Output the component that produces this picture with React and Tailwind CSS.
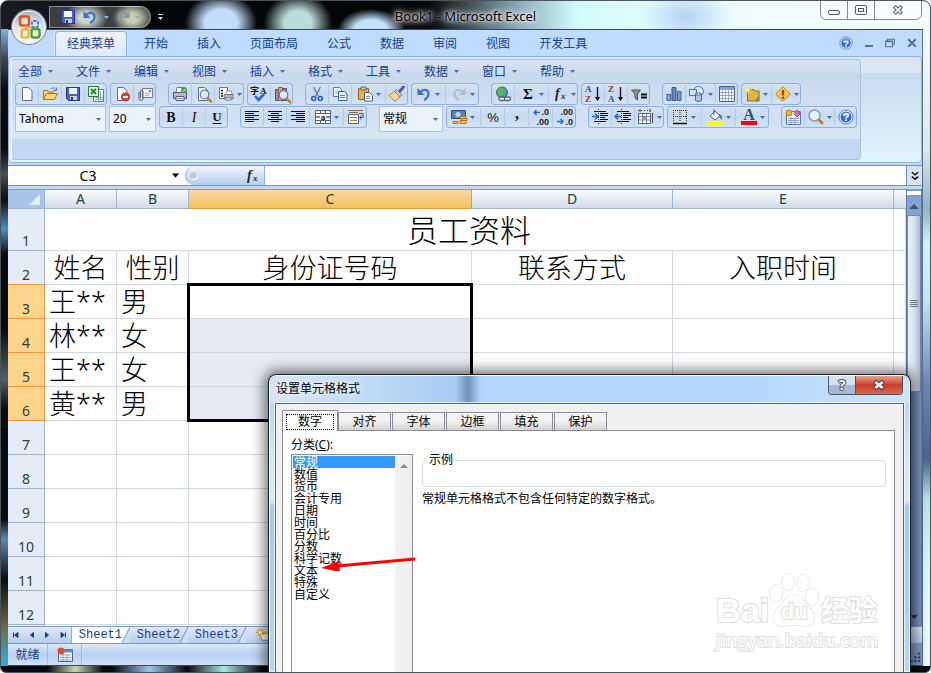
import React, { useState } from 'react';

const SERIF = 'Liberation Serif';

const Svg = ({ children, className = 'w-4 h-4' }) => (
    <svg viewBox="0 0 16 16" className={`${className} shrink-0 overflow-visible`} fill="none" aria-hidden="true">
        {children}
    </svg>
);

const Floppy = () => (
    <>
        <path d="M1.5 1.5h13v13h-11l-2-2z" fill="#4a5fc8" stroke="#27338f" />
        <path d="M4 2h8v6H4z" fill="#f4f7ff" />
        <path d="M5 10h7v4H5z" fill="#c9cfe0" />
        <path d="M6 11h2v3H6z" fill="#27338f" />
    </>
);

const Page = () => <path d="M3.5 1.5h6l3.5 3.5v9.500H3.500z" fill="#fff" stroke="#5b6f96" />;

const Undo = ({ color = '#3d6fd0' }) => (
    <>
        <path d="M4 6c4-4 9-2 8.500 2.500C12.300 11 10.500 12.500 8 14" stroke={color} strokeWidth="2.200" />
        <path d="M1.500 2v7h7z" fill={color} />
    </>
);

const Redo = ({ color = '#aebdd3' }) => (
    <g transform="translate(16 0) scale(-1 1)">
        <Undo color={color} />
    </g>
);

const HelpBall = () => (
    <>
        <circle cx="8" cy="8" r="7" fill="#fff" stroke="#4a78c8" />
        <circle cx="8" cy="8" r="5.500" fill="#2f6bd6" />
        <path d="M4 6a4.500 4.500 0 0 1 8 0c-2 2-6 2-8 0z" fill="#7fabf0" />
        <text x="8" y="12" textAnchor="middle" fontSize="11" fontWeight="bold" fontFamily="Liberation Sans" fill="#fff">?</text>
    </>
);

const Printer = () => (
    <>
        <path d="M5 1.500h7l1 5H4z" fill="#fff" stroke="#6b7891" />
        <path d="M1.500 6.500h13v6h-13z" fill="#b4bdcc" stroke="#4e5a70" />
        <path d="M4 10.500h8v4H4z" fill="#fff" stroke="#4e5a70" />
        <path d="M5 12.500h6" stroke="#6b8fd0" />
    </>
);

const Lens = ({ x = 0, y = 0 }) => (
    <g transform={`translate(${x} ${y})`}>
        <path d="M10.500 10.500l3.500 3.500" stroke="#b8842c" strokeWidth="2.500" strokeLinecap="round" />
        <circle cx="7.500" cy="7" r="4.300" fill="#d8ecfb" stroke="#6c7c98" strokeWidth="1.300" />
    </g>
);

const Lines = ({ rows }) => rows.map(([x, w], i) => <path key={i} d={`M${x} ${2.5 + i * 2}h${w}`} stroke="#111" />);

const ICONS = {
    save: <Floppy />,
    blank: <Page />,
    open: (
        <>
            <path d="M1.500 13V4.500h4l1 1.500h5V8" fill="#f3d27a" stroke="#a67a1c" />
            <path d="M1.500 13.500l3-6h11l-3 6z" fill="#ffd76a" stroke="#a67a1c" />
            <path d="M9 3c2-2 4-1 5 1M14.500 1.500v3h-3" stroke="#4b79b8" />
        </>
    ),
    excel: (
        <>
            <path d="M5.500 3.500h10v12h-10z" fill="#fff" stroke="#5a77a6" />
            <path d="M7 11.500h8M7 13.500h8M12.500 5v9M10.500 9v6" stroke="#8ca6cf" />
            <path d="M.500.500h10v10H.500z" fill="#e4f5e0" stroke="#2a7a35" />
            <path d="M3 3l5 5M8 3L3 8" stroke="#1f8a34" strokeWidth="2" />
        </>
    ),
    blocked: (
        <>
            <Page />
            <circle cx="11.500" cy="11" r="4" fill="#e2422c" stroke="#b3301f" />
            <path d="M9 11h5" stroke="#fff" strokeWidth="1.800" />
        </>
    ),
    mail: (
        <>
            <path d="M5.500 2.500h10v9h-10z" fill="#f2f6fc" stroke="#6b7f9e" />
            <path d="M12 4h2v2h-2z" fill="#e0562f" />
            <path d="M8 7.500h5M8 9.500h4" stroke="#9fb1cc" />
            <path d="M2 6v6.500a2 2 0 0 0 4 0V5a1.300 1.300 0 0 0-2.500 0v7" stroke="#59687f" />
        </>
    ),
    print: (
        <>
            <Printer />
            <circle cx="12" cy="4" r="3" fill="#3ba34a" />
            <path d="M10.500 4l1.200 1.200L13.500 3" stroke="#fff" />
        </>
    ),
    preview: (
        <>
            <Page />
            <Lens x={2} y={1.5} />
        </>
    ),
    setup: (
        <>
            <path d="M1.500 1.500h8v11h-8z" fill="#fff" stroke="#6b7891" />
            <path d="M3 4.500h2M3 7.500h2M3 10h2" stroke="#111" strokeWidth="1.500" />
            <g transform="translate(5 4) scale(.7)"><Printer /></g>
        </>
    ),
    spelling: (
        <>
            <text x="-1" y="8" fontSize="9" fontWeight="bold" fontFamily="Noto Sans CJK SC" fill="#111">字</text>
            <text x="9" y="8" fontSize="9" fontWeight="bold" fontFamily={SERIF} fill="#111">A</text>
            <path d="M4 10l3.500 4L13 8" stroke="#2f66cf" strokeWidth="2.600" />
        </>
    ),
    research: (
        <>
            <path d="M1.500 3.500h3v11h-3z" fill="#7d8fd8" stroke="#43529c" />
            <path d="M4.500 1.500h4v13h-4z" fill="#e4b33c" stroke="#8f6a14" />
            <path d="M8.500 2.500h4v12h-4z" fill="#9c7dd0" stroke="#5f438f" />
            <Lens x={2} y={2} />
        </>
    ),
    cut: (
        <>
            <path d="M4.500 1l5 9.500M11.500 1l-5 9.500" stroke="#6f7f98" strokeWidth="1.500" />
            <circle cx="4.700" cy="12.500" r="2" stroke="#2c5fc0" strokeWidth="1.600" />
            <circle cx="11.300" cy="12.500" r="2" stroke="#2c5fc0" strokeWidth="1.600" />
        </>
    ),
    copy: (
        <>
            <path d="M1.500 1.500h6l2 2v7h-8z" fill="#fff" stroke="#4a78c4" />
            <path d="M3 5h4M3 7h4" stroke="#7ea3df" />
            <path d="M6.500 5.500h6l2.500 2.500v6.500H6.500z" fill="#e9f1ff" stroke="#3766b8" />
            <path d="M8 9.500h5M8 11.500h5" stroke="#4b7fd6" />
        </>
    ),
    paste: (
        <>
            <path d="M1.500 2.500h10v11h-10z" fill="#e7b04b" stroke="#93631b" />
            <path d="M4 1h5v3H4z" fill="#c3c9d3" stroke="#5b6472" />
            <path d="M7.500 6.500h5l3 3v5.500h-8z" fill="#fff" stroke="#4b5f86" />
            <path d="M9 10.500h4M9 12.500h4" stroke="#7f93b8" />
        </>
    ),
    brush: (
        <>
            <path d="M10.500 5.500l4-4.500" stroke="#5c50a8" strokeWidth="3" strokeLinecap="round" />
            <path d="M7.500 3.500l5.500 5.500-2.500 2-5-5z" fill="#c9cfda" stroke="#77809a" />
            <path d="M5.500 5.500L11 11l-5 4.500-6-6z" fill="#f6d98c" stroke="#ae8022" />
        </>
    ),
    undo: <Undo />,
    redo: <Redo />,
    link: (
        <>
            <circle cx="7" cy="6.500" r="5.500" fill="#4a8fdc" stroke="#2a5fa0" />
            <path d="M3 3c3-3 5-1 5 0s3 2 2 4-4 1-5 4c-3-1-3-5-2-8z" fill="#59b947" />
            <rect x="4" y="11" width="6" height="3.500" rx="1.700" fill="#eef2f8" stroke="#55627a" strokeWidth="1.300" />
            <rect x="9.500" y="11" width="6" height="3.500" rx="1.700" fill="#eef2f8" stroke="#55627a" strokeWidth="1.300" />
        </>
    ),
    sum: <text x="8" y="13" textAnchor="middle" fontSize="15" fontWeight="bold" fontFamily={SERIF} fill="#111">Σ</text>,
    fx: (
        <>
            <text x="3" y="12" fontSize="14" fontStyle="italic" fontWeight="bold" fontFamily={SERIF} fill="#222">f</text>
            <text x="9" y="13" fontSize="9" fontStyle="italic" fontWeight="bold" fontFamily={SERIF} fill="#222">x</text>
        </>
    ),
    sortAsc: (
        <>
            <text x="0" y="6" fontSize="9" fontWeight="bold" fontFamily={SERIF} fill="#2c4fa8">A</text>
            <text x="0" y="16" fontSize="9" fontWeight="bold" fontFamily={SERIF} fill="#a82c2c">Z</text>
            <path d="M12.500 1v12" stroke="#111" strokeWidth="1.300" />
            <path d="M9.800 11h5.400l-2.700 4z" fill="#111" />
        </>
    ),
    sortDesc: (
        <>
            <text x="0" y="6" fontSize="9" fontWeight="bold" fontFamily={SERIF} fill="#a82c2c">Z</text>
            <text x="0" y="16" fontSize="9" fontWeight="bold" fontFamily={SERIF} fill="#2c4fa8">A</text>
            <path d="M12.500 1v12" stroke="#111" strokeWidth="1.300" />
            <path d="M9.800 11h5.400l-2.700 4z" fill="#111" />
        </>
    ),
    filter: (
        <>
            <path d="M.500 4h9L6.500 8v6L4 12V8z" fill="#8b8f94" stroke="#55585c" />
            <path d="M10 8.500h6M10 11.500h6" stroke="#111" strokeWidth="1.800" />
        </>
    ),
    chart: (
        <>
            <path d="M1 8.500h3.500v6H1z" fill="#8fa9d4" stroke="#44608f" />
            <path d="M6 1.500h4v13H6z" fill="#6687bf" stroke="#3b5587" />
            <path d="M11.500 5.500h3.500v9h-3.500z" fill="#7f9bcb" stroke="#44608f" />
        </>
    ),
    shapes: (
        <>
            <circle cx="9.500" cy="5.500" r="5" fill="#e2edfa" stroke="#4f76ad" />
            <path d="M.500 3.500h7v6h-7z" fill="#d2e2f5" stroke="#4f76ad" />
            <path d="M6.500 8v6.500c2 1.300 4 1.300 6 0V8z" fill="#a9c6ea" stroke="#3f68a5" />
            <ellipse cx="9.500" cy="8" rx="3" ry="1.200" fill="#dbe9f9" stroke="#3f68a5" />
        </>
    ),
    grid: (
        <>
            <path d="M.500.500h15v15H.500z" fill="#fff" stroke="#44608f" />
            <path d="M1 1h14v2H1z" fill="#86a3d0" />
            <path d="M1 3.500h14M1 6.500h14M1 9.500h14M1 12.500h14M3.500 1v14M6.500 1v14M9.500 1v14M12.500 1v14" stroke="#8298c0" strokeWidth=".8" />
        </>
    ),
    folder: (
        <>
            <path d="M3.500 6l2-2.500h4l1 1.500h4.500v10h-11.500z" fill="#dfb842" stroke="#8a6a14" />
            <path d="M11 14.500h4v-5z" fill="#a67c1a" />
            <path d="M4 0v8M0 4h8M1.200 1.200l5.600 5.600M6.800 1.200L1.200 6.800" stroke="#ffdf4a" />
            <circle cx="4" cy="4" r="1.500" fill="#fff3a8" />
        </>
    ),
    warn: (
        <>
            <path d="M8 .700L15.300 8 8 15.300.700 8z" fill="#fbd13a" stroke="#b98412" />
            <path d="M8 4v5.500" stroke="#d4261c" strokeWidth="2.400" />
            <circle cx="8" cy="11.700" r="1.300" fill="#d4261c" />
        </>
    ),
    bold: <text x="8" y="13" textAnchor="middle" fontSize="14" fontWeight="bold" fontFamily={SERIF} fill="#111">B</text>,
    italic: <text x="8" y="13" textAnchor="middle" fontSize="14" fontStyle="italic" fontFamily={SERIF} fill="#111">I</text>,
    underline: (
        <>
            <text x="8" y="12" textAnchor="middle" fontSize="13" fontWeight="bold" fontFamily={SERIF} fill="#111">U</text>
            <path d="M3.500 14.500h9" stroke="#111" />
        </>
    ),
    left: <Lines rows={[[1, 14], [1, 9], [1, 14], [1, 9], [1, 14], [1, 9]]} />,
    center: <Lines rows={[[1, 14], [4, 8], [1, 14], [4, 8], [1, 14], [4, 8]]} />,
    right: <Lines rows={[[1, 14], [6, 9], [1, 14], [6, 9], [1, 14], [6, 9]]} />,
    merge: (
        <>
            <path d="M.500 1.500h15v13H.500z" fill="#fff" stroke="#55657f" />
            <path d="M1 4.500h14M1 11.500h14M5.500 1v3M10.500 1v3M5.500 12v3M10.500 12v3" stroke="#55657f" />
            <text x="8" y="10.500" textAnchor="middle" fontSize="9" fontWeight="bold" fontFamily={SERIF} fill="#111">a</text>
            <path d="M1 8h4M11 8h4" stroke="#111" />
        </>
    ),
    wrap: (
        <>
            <path d="M.500 5.500h10v9H.500z" fill="#fff" stroke="#55657f" />
            <path d="M0 1.500h15M1 3.500h9" stroke="#8a6a48" />
            <path d="M2 8.500h7M2 11.500h7" stroke="#c07f43" />
            <path d="M11 4.500h4v4h-3M13.500 6.500l-2 2 2 2" stroke="#3b5c96" />
        </>
    ),
    currency: (
        <>
            <path d="M.500 1.500h14v8H.500z" fill="#5b7fc0" stroke="#2f4c88" />
            <circle cx="7" cy="5.500" r="2.500" fill="#c6d7f2" />
            <path d="M9 7.500h6v2H9zM10 9.500h6v2h-6zM9 11.500h6v3H9z" fill="#f6c842" stroke="#a87816" />
            <path d="M2 12.500h5v2H2z" fill="#f6c842" stroke="#a87816" />
        </>
    ),
    percent: <text x="8" y="13" textAnchor="middle" fontSize="13" fontFamily="Liberation Sans" fill="#111">%</text>,
    comma: <text x="8" y="10" textAnchor="middle" fontSize="16" fontWeight="bold" fontFamily={SERIF} fill="#111">,</text>,
    decInc: (
        <>
            <text x="16" y="6" textAnchor="end" fontSize="9" fontWeight="bold" fontFamily="Liberation Sans" fill="#222">.0</text>
            <text x="16" y="16" textAnchor="end" fontSize="9" fontWeight="bold" fontFamily="Liberation Sans" fill="#222">.00</text>
            <path d="M1 3.500h6M3.500 1L1 3.500 3.500 6" stroke="#2c66cf" strokeWidth="1.400" />
        </>
    ),
    decDec: (
        <>
            <text x="16" y="6" textAnchor="end" fontSize="9" fontWeight="bold" fontFamily="Liberation Sans" fill="#222">.00</text>
            <text x="16" y="16" textAnchor="end" fontSize="9" fontWeight="bold" fontFamily="Liberation Sans" fill="#222">.0</text>
            <path d="M0 12.500h6M3.500 10L6 12.500 3.500 15" stroke="#2c66cf" strokeWidth="1.400" />
        </>
    ),
    indent: (
        <>
            <Lines rows={[[2, 12], [8, 8], [8, 8], [8, 5], [8, 8], [2, 12]]} />
            <path d="M0 7.500h6M3 4.500l3 3-3 3" stroke="#2c66cf" strokeWidth="1.600" />
            <path d="M6.500 0v16" stroke="#333" strokeDasharray="1 1" />
        </>
    ),
    outdent: (
        <>
            <Lines rows={[[2, 12], [8, 8], [8, 8], [8, 5], [8, 8], [2, 12]]} />
            <path d="M0 7.500h6M3 4.500l-3 3 3 3" stroke="#2c66cf" strokeWidth="1.600" />
            <path d="M6.500 0v16" stroke="#333" strokeDasharray="1 1" />
        </>
    ),
    format: (
        <>
            <path d="M0 1.500h13" stroke="#222" strokeDasharray="1 2" />
            <path d="M2 0v3M12 0v3M14.500 4v10" stroke="#444" />
            <path d="M.500 4.500h12v10H.500z" fill="#fff" stroke="#55657f" />
            <path d="M4.500 5v9M8.500 5v9M1 7.500h11M1 11h11" stroke="#7a889f" />
            <path d="M5 8h3v3H5z" fill="#6fa0ef" />
        </>
    ),
    border: (
        <>
            <path d="M1.500 1v12M8 1v12M14.500 1v12M1 1.500h14M1 7.500h14" stroke="#333" strokeDasharray="1 1" />
            <path d="M1 14.500h14" stroke="#111" strokeWidth="1.500" />
        </>
    ),
    fill: (
        <>
            <path d="M3 7l5-5 5 5-5 4z" fill="#eef3fa" stroke="#4a5a78" />
            <path d="M7 0v6" stroke="#4a5a78" />
            <path d="M12 5c3 1 3.500 3 2.500 6-1.500-2-1-3-2.500-4z" fill="#3d6fd0" />
            <path d="M0 12h16v4H0z" fill="#ffff00" />
        </>
    ),
    color: (
        <>
            <text x="8" y="11" textAnchor="middle" fontSize="16" fontWeight="bold" fontFamily={SERIF} fill="#2c4a86">A</text>
            <path d="M0 12h16v4H0z" fill="#ff0000" />
        </>
    ),
    table: (
        <>
            <path d="M1.500 2.500h14v13h-14z" fill="#fff" stroke="#5a77b0" />
            <path d="M3 9.500h11M3 11.500h11M3 13.500h11M6 8v7M10 8v7" stroke="#8aa0d0" />
            <circle cx="4" cy="4" r="3" fill="#f3b53a" stroke="#b27a15" />
            <path d="M9 4.500l3-3.500 3.500 3.500-3.500 3.500z" fill="#d66ad6" stroke="#9a3a9c" />
        </>
    ),
    search: (
        <>
            <path d="M11 11l3 3" stroke="#b8842c" strokeWidth="3" strokeLinecap="round" />
            <circle cx="6.500" cy="6.500" r="5.500" fill="#e6f2fc" stroke="#8c99ae" strokeWidth="1.500" />
        </>
    ),
    help: <HelpBall />,
    record: (
        <>
            <path d="M1.500 2.500h14v12h-14z" fill="#fff" stroke="#43669f" />
            <path d="M6 2.500h9.500v3H6z" fill="#5c8fdb" />
            <path d="M3 8h11M3 10.500h11M3 13h11M6 7v7M10 7v7" stroke="#8aa4d0" />
            <circle cx="4" cy="4" r="3.500" fill="#dd4b31" />
        </>
    ),
};

const Caret = ({ className = 'text-[#4a6ea5]' }) => (
    <svg viewBox="0 0 5 3" className={`w-[5px] h-[3px] shrink-0 ${className}`} aria-hidden="true">
        <path d="M0 0h5L2.500 3z" fill="currentColor" />
    </svg>
);

// [icon, label, size]: md is a slightly wider button, dd and ddl carry a drop-down arrow
const TOOLBAR_TOP = [
    { items: [['blank', '新建'], ['open', '打开'], ['save', '保存'], ['excel', '另存为']] },
    { items: [['blocked', '权限'], ['mail', '邮件']] },
    { wide: true, items: [['print', '打印'], ['preview', '打印预览'], ['setup', '页面设置', 'dd']] },
    { items: [['spelling', '拼写检查'], ['research', '信息检索']] },
    { wide: true, items: [['cut', '剪切'], ['copy', '复制'], ['paste', '粘贴', 'ddl'], ['brush', '格式刷']] },
    { items: [['undo', '撤消', 'ddl'], ['redo', '恢复', 'ddl']] },
    { wide: true, items: [['link', '超链接'], ['sum', '求和', 'ddl'], ['fx', '函数', 'dd']] },
    { items: [['sortAsc', '升序'], ['sortDesc', '降序'], ['filter', '筛选']] },
    { wide: true, items: [['chart', '图表'], ['shapes', '形状', 'dd'], ['grid', '表格']] },
    { items: [['folder', '新建文件夹', 'dd'], ['warn', '错误检查', 'dd']] },
];

const TOOLBAR_BOTTOM_LEFT = [
    { items: [['bold', '加粗'], ['italic', '倾斜'], ['underline', '下划线']] },
    { wide: true, items: [['left', '左对齐'], ['center', '居中'], ['right', '右对齐'], ['merge', '合并', 'ddl'], ['wrap', '自动换行', 'md']] },
];

const TOOLBAR_BOTTOM_RIGHT = [
    { items: [['currency', '货币', 'ddl'], ['percent', '百分比', 'md'], ['comma', '千位分隔', 'md'], ['decInc', '增加小数位', 'md'], ['decDec', '减少小数位', 'md']] },
    { wide: true, items: [['indent', '增加缩进'], ['outdent', '减少缩进'], ['format', '格式', 'dd']] },
    { items: [['border', '边框', 'ddl'], ['fill', '填充颜色', 'ddl'], ['color', '字体颜色', 'ddl']] },
    { wide: true, items: [['table', '选项'], ['search', '缩放', 'dd'], ['help', '帮助']] },
];

const BUTTON_WIDTH = { sm: 'w-[23px]', md: 'w-6', dd: 'w-[30px]', ddl: 'w-[34px]' };

const ToolGroup = ({ group }) => (
    <div
        className={`flex h-[22px] shrink-0 rounded-sm ring-1 ring-inset ring-[#8fb1dc] bg-linear-to-b from-[#d6e4f5] via-[#c6d9f0] to-[#d5e5f7] ${
            group.wide ? 'ml-3' : 'ml-[3px]'
        }`}
    >
        {group.items.map(([icon, label, size = 'sm'], i) => (
            <button
                key={icon}
                aria-label={label}
                className={`flex items-center justify-center gap-[3px] ${BUTTON_WIDTH[size]} ${i > 0 ? 'border-l border-[#b3cbe8]' : ''}`}
            >
                <Svg>{ICONS[icon]}</Svg>
                {size.startsWith('dd') && <Caret />}
            </button>
        ))}
    </div>
);

const Combo = ({ label, value, className }) => (
    <div className={`relative shrink-0 ${className}`}>
        <select
            aria-label={label}
            className="block w-full h-[26px] px-[3px] appearance-none bg-[#eaf2fc] border border-[#abc5e8] text-xs text-black outline-none"
        >
            <option>{value}</option>
        </select>
        <Caret className="absolute right-[5px] top-3 text-[#4a6ea5]" />
    </div>
);

const TABS = ['开始', '插入', '页面布局', '公式', '数据', '审阅', '视图', '开发工具'];
const MENUS = ['全部', '文件', '编辑', '视图', '插入', '格式', '工具', '数据', '窗口', '帮助'];

const OfficeButton = () => (
    <button aria-label="Office 按钮" className="absolute left-2.5 top-1.5 w-10 h-10">
        <svg viewBox="0 0 40 40" className="w-10 h-10" fill="none">
            <defs>
                <radialGradient id="orb" cx=".5" cy=".8" r=".8">
                    <stop offset="0" stopColor="#ffffff" />
                    <stop offset=".6" stopColor="#dfe4ec" />
                    <stop offset="1" stopColor="#9aa6b8" />
                </radialGradient>
            </defs>
            <circle cx="18" cy="20" r="17.500" fill="url(#orb)" stroke="#6f7f99" />
            <circle cx="18" cy="20" r="16" stroke="#fff" />
            <rect x="9" y="9.500" width="9" height="9" rx="2" stroke="#e4511b" strokeWidth="2.600" />
            <rect x="21" y="14" width="6" height="6" rx="1.500" stroke="#3c86d6" strokeWidth="2" strokeDasharray="3 1" />
            <rect x="10.500" y="22.500" width="7" height="8" rx="1.500" stroke="#f3ac1d" strokeWidth="2.200" />
            <rect x="20.500" y="22" width="8" height="8.500" rx="2" stroke="#4f9e33" strokeWidth="2.400" />
            <path d="M15 17v5M17 20h4" stroke="#f2941e" strokeWidth="1.500" />
        </svg>
    </button>
);

const TitleBar = () => (
    <header className="relative flex h-7 shrink-0 justify-center bg-[radial-gradient(ellipse_36px_30px_at_220px_22px,#c3dcfc_45%,transparent),radial-gradient(ellipse_34px_30px_at_297px_22px,#b9ddd8_40%,transparent),radial-gradient(ellipse_34px_22px_at_370px_30px,#c3e2fb_50%,transparent),radial-gradient(ellipse_46px_30px_at_685px_16px,#b4d2f6,transparent),linear-gradient(90deg,#1a1c20_0,#050608_15%,#050608_46%,#8fb0bd_56%,#d3fbfd_62%,#e2fdff_72%,#effcfd_80%,#f6fcfc)]">
        <div className="absolute left-12 top-[5px] flex h-[22px] w-[102px] items-center rounded-r-full border border-white/40 bg-[radial-gradient(ellipse_22px_16px_at_36px_11px,#cfd8cd_30%,transparent),radial-gradient(ellipse_20px_16px_at_82px_11px,#c4cfae_30%,transparent)] bg-[#3c3e42] pl-2.5">
            <button aria-label="保存"><Svg>{ICONS.save}</Svg></button>
            <button aria-label="撤消" className="ml-1.5 flex items-center gap-1.5">
                <Svg>{ICONS.undo}</Svg>
                <Caret className="text-[#8fb6f0]" />
            </button>
            <button aria-label="恢复" className="ml-1.5 flex items-center gap-1"><Svg><Redo color="#8797ac" /></Svg><Caret className="text-[#a3ab9f]" /></button>
        </div>
        <button aria-label="自定义快速访问工具栏" className="absolute left-[157px] top-[13px] flex flex-col gap-px border-t border-[#cfe0f8] pt-0.5">
            <Caret className="text-[#cfe0f8]" />
        </button>
        <h1 className="pt-1.5 text-[13px] leading-[18px] text-black [text-shadow:0_0_3px_#fff,0_0_6px_#fff,0_0_10px_#fff]">
            Book1 - Microsoft Excel
        </h1>
        <div className="absolute right-2 -top-px flex h-5 w-[102px] rounded-b-md border border-[#7d8c90] bg-white/40">
            <button aria-label="最小化" className="flex flex-1 items-center justify-center border-r border-[#7d8c90]">
                <span className="mt-1 h-[5px] w-3 rounded-xs border border-[#4f5a62] bg-white" />
            </button>
            <button aria-label="还原" className="flex flex-1 items-center justify-center border-r border-[#7d8c90]">
                <span className="flex h-2.5 w-3 items-center justify-center rounded-xs border border-[#4f5a62] bg-white">
                    <span className="h-1 w-1.5 border border-[#4f5a62]" />
                </span>
            </button>
            <button aria-label="关闭" className="flex w-[46px] items-center justify-center">
                <Svg className="w-2.5 h-2.5">
                    <path d="M2 2l12 12M14 2L2 14" stroke="#4f5a62" strokeWidth="6" />
                    <path d="M3 3l10 10M13 3L3 13" stroke="#fff" strokeWidth="2.500" />
                </Svg>
            </button>
        </div>
    </header>
);

const Ribbon = () => (
    <>
        <nav className="flex h-[26px] shrink-0 items-end bg-[#bfdbff] pl-[45px] text-xs text-[#15428b]">
            <div className="flex flex-1 items-end gap-px">
                <button className="mx-0.5 h-[25px] rounded-t border border-b-0 border-[#8db2e3] bg-linear-to-b from-[#ebf3fd] to-[#dfeafa] px-[11px] shadow-[0_0_2px_#fff]">
                    经典菜单
                </button>
                {TABS.map((tab) => (
                    <button key={tab} className="h-[25px] px-3.5">{tab}</button>
                ))}
            </div>
            <div className="flex h-full items-center gap-3 pr-[5px]">
                <button aria-label="帮助"><Svg className="w-3.5 h-3.5"><HelpBall /></Svg></button>
                <button aria-label="最小化窗口" className="mt-1.5 h-0.5 w-2 bg-[#5f6f86]" />
                <button aria-label="还原窗口">
                    <Svg className="w-2.5 h-2.5"><path d="M4 4V2h11v8h-2M1 5h11v9H1zM1 6h11" stroke="#5f6f86" strokeWidth="1.800" /></Svg>
                </button>
                <button aria-label="关闭窗口">
                    <Svg className="w-2.5 h-2.5"><path d="M2 2l12 12M14 2L2 14" stroke="#5f6f86" strokeWidth="3" /></Svg>
                </button>
            </div>
        </nav>
        <section className="shrink-0 rounded border border-[#8db2e3] bg-linear-to-b from-[#dbe6f4] from-15% via-[#c9dbef] via-16% to-[#e3f4fd] p-[2px]">
            <div className="mr-[58px] rounded border border-[#a6c1e0] border-l-white/70 bg-linear-to-b from-[#dbe5f2] from-0% via-[#c8d9ed] via-16% to-[#d8e6f5] to-80% text-[#15428b]">
                <div className="flex h-[23px] items-center pl-[3px]">
                    {MENUS.map((menu) => (
                        <button key={menu} className="flex w-[58px] items-center gap-1.5 pl-[3px] text-xs">
                            {menu}
                            <Caret />
                        </button>
                    ))}
                </div>
                <div className="flex pb-px">
                    {TOOLBAR_TOP.map((group, i) => <ToolGroup key={i} group={group} />)}
                </div>
                <div className="flex h-[33px] items-start pl-[3px]">
                    <Combo label="字体" value="Tahoma" className="mr-[3px] w-[91px]" />
                    <Combo label="字号" value="20" className="w-[47px]" />
                    {TOOLBAR_BOTTOM_LEFT.map((group, i) => <ToolGroup key={i} group={group} />)}
                    <Combo label="数字格式" value="常规" className="ml-3 w-16" />
                    {TOOLBAR_BOTTOM_RIGHT.map((group, i) => <ToolGroup key={i} group={group} />)}
                </div>
                <div className="h-5 rounded-b bg-[#c1d8f0]" />
            </div>
        </section>
    </>
);

const FormulaBar = () => {
    const [formula, setFormula] = useState('');

    return (
        <div className="mt-0.5 flex h-[21px] shrink-0 border-y border-[#6f94c4] bg-white">
            <label className="relative flex w-[176px]">
                <input aria-label="名称框" defaultValue="C3" className="w-full pr-4 text-center text-sm leading-4 text-black outline-none" />
                <Caret className="absolute right-1.5 top-2 scale-150 text-black" />
            </label>
            <div className="ml-px flex w-20 items-center justify-between rounded-l-full border border-[#8fb1dc] border-y-0 bg-linear-to-b from-[#f2f7fe] to-[#b4cdee] pr-1 pl-1">
                <span className="h-2 w-2 rounded-full bg-[#c2c9d4] shadow-[inset_-1px_-1px_1px_#fff]" />
                <button aria-label="插入函数"><Svg>{ICONS.fx}</Svg></button>
            </div>
            <input
                aria-label="编辑栏"
                value={formula}
                onChange={(e) => setFormula(e.target.value)}
                className="min-w-0 flex-1 px-1 text-sm outline-none"
            />
            <button aria-label="展开编辑栏" className="flex w-4 items-center justify-center border-l border-[#6f94c4] bg-[#d5e4f7]">
                <Svg className="w-2.5 h-2.5"><path d="M3 2l5 4 5-4M3 9l5 4 5-4" stroke="#111" strokeWidth="2.500" /></Svg>
            </button>
        </div>
    );
};

const COLUMNS = ['A', 'B', 'C', 'D', 'E'];
const PEOPLE = {
    3: ['王**', '男'],
    4: ['林**', '女'],
    5: ['王**', '女'],
    6: ['黄**', '男'],
};
const ROWS = [3, 4, 5, 6, 7, 8, 9, 10, 11, 12, 13];

const CELL = 'border-r border-b border-[#d0d7e5] p-0';
const ROW_HEAD = 'border-r border-b p-0 align-bottom text-center text-sm leading-[18px] font-normal';

const Sheet = () => (
    <div className="min-w-0 flex-1 overflow-hidden bg-white">
        <table className="w-full table-fixed border-separate border-spacing-0 border-t border-[#7a9cc6] text-black">
            <colgroup>
                <col className="w-[37px]" />
                <col className="w-[72px]" />
                <col className="w-[72px]" />
                <col className="w-[283px]" />
                <col className="w-[201px]" />
                <col className="w-[221px]" />
                <col />
            </colgroup>
            <thead>
                <tr className="h-[19px] text-sm leading-4 text-[#27413e]">
                    <th className="border-r border-b border-[#9eb6ce] bg-[#a9c4e9] p-0">
                        <svg viewBox="0 0 11 11" className="ml-auto mr-1 h-[11px] w-[11px]"><path d="M11 0v11H0z" fill="#e2ebf6" /></svg>
                    </th>
                    {COLUMNS.map((col) => (
                        <th
                            key={col}
                            className={`border-r border-b p-0 font-normal bg-linear-to-b ${
                                col === 'C'
                                    ? 'border-[#f29536] from-[#f9d99f] to-[#f1c15f]'
                                    : 'border-[#9eb6ce] from-[#f9fcfd] to-[#d3dbe9]'
                            }`}
                        >
                            {col}
                        </th>
                    ))}
                    <th aria-label="F" className="border-b border-[#9eb6ce] bg-linear-to-b from-[#f9fcfd] to-[#d3dbe9] p-0" />
                </tr>
            </thead>
            <tbody className="font-light">
                <tr className="h-[42px]">
                    <th className={`${ROW_HEAD} border-[#9eb6ce] bg-[#e4ecf7] text-[#27413e]`}>1</th>
                    <td colSpan={5} className={`${CELL} text-center text-[31px] leading-10`}>员工资料</td>
                    <td className={CELL} />
                </tr>
                <tr className="h-[34px] text-center text-[27px] leading-8">
                    <th className={`${ROW_HEAD} border-[#9eb6ce] border-b-[#f29536] bg-[#e4ecf7] text-[#27413e]`}>2</th>
                    <td className={CELL}>姓名</td>
                    <td className={CELL}>性别</td>
                    <td className={CELL}>身份证号码</td>
                    <td className={CELL}>联系方式</td>
                    <td className={CELL}>入职时间</td>
                    <td className={CELL} />
                </tr>
                {ROWS.map((row) => {
                    const [name, gender] = PEOPLE[row] || [];
                    return (
                        <tr key={row} className="h-[34px] text-[27px] leading-8">
                            <th
                                className={`${ROW_HEAD} text-[#27413e] ${
                                    PEOPLE[row] ? 'border-[#f29536] bg-[#ffd58d]' : 'border-[#9eb6ce] bg-[#e4ecf7]'
                                }`}
                            >
                                {row < 13 && row}
                            </th>
                            <td className={`${CELL} pl-1`}>{name}</td>
                            <td className={`${CELL} pl-1`}>{gender}</td>
                            <td className={`relative ${CELL} ${row > 3 && PEOPLE[row] ? 'bg-[#e7eaf5]' : ''}`}>
                                {/* selection frame around C3:C6 */}
                                {row === 3 && (
                                    <div className="absolute -top-0.5 -left-0.5 z-10 h-[139px] w-[286px] border-[3px] border-black" />
                                )}
                            </td>
                            <td className={CELL} />
                            <td className={CELL} />
                            <td className={CELL} />
                        </tr>
                    );
                })}
            </tbody>
        </table>
    </div>
);

const VerticalScroll = () => (
    <div className="flex w-4 shrink-0 flex-col border-x border-[#5f7fae] bg-linear-to-r from-[#5d7ba8] to-[#7b98c2]">
        <div className="h-2 border-y-2 border-[#7a9cc6] bg-white" />
        <button aria-label="向上" className="flex h-[18px] items-center justify-center bg-[#85a3d0]">
            <svg viewBox="0 0 10 5" className="h-[5px] w-2.5"><path d="M0 5l5-5 5 5z" fill="#42536f" /></svg>
        </button>
        <div className="flex h-[177px] flex-col items-center justify-center gap-px rounded-xs border border-[#6f88b0] bg-linear-to-r from-[#e9eff6] via-[#dae3ee] to-[#a9bbd0]">
            {[0, 1, 2, 3].map((i) => <span key={i} className="h-px w-2 bg-[#6d7c92]" />)}
        </div>
        <div className="flex-1" />
        <button aria-label="向下" className="flex h-[18px] items-center justify-center">
            <svg viewBox="0 0 10 5" className="h-1 w-2"><path d="M0 0h10L5 5z" fill="#26344c" /></svg>
        </button>
    </div>
);

const NAV_ARROWS = [
    ['第一张', 'M3 3v10M12 3v10L5 8z'],
    ['上一张', 'M11 3v10L5 8z'],
    ['下一张', 'M5 3v10l6-5z'],
    ['最后一张', 'M13 3v10M4 3v10l7-5z'],
];

const SheetTabs = () => (
    <div className="flex h-[18px] shrink-0 border-y border-[#7a9cc6] bg-linear-to-b from-[#dfeafa] to-[#b5cdee]">
        <div className="flex w-16 items-center justify-around border-r border-[#8fb1dc]">
            {NAV_ARROWS.map(([label, d]) => (
                <button key={label} aria-label={label}>
                    <Svg className="w-2 h-2"><path d={d} fill="#15428b" stroke="#15428b" strokeWidth="2" /></Svg>
                </button>
            ))}
        </div>
        {['Sheet1', 'Sheet2', 'Sheet3'].map((name, i) => (
            <button
                key={name}
                className={`flex w-[58px] shrink-0 items-center justify-end font-['Liberation_Mono'] text-xs leading-4 text-[#15428b] ${
                    i === 0 ? 'bg-white' : ''
                }`}
            >
                {name}
                <svg viewBox="0 0 8 16" className="h-4 w-2 shrink-0">
                    <path d="M8 0v16H0z" fill="#cddef5" />
                    <path d="M8 0L0 16" stroke="#6f94c4" />
                </svg>
            </button>
        ))}
        <button aria-label="插入工作表" className="ml-2.5">
            <Svg className="h-3.5 w-3.5">
                <path d="M4 6h11v8H7z" fill="#fff" stroke="#6f83a8" />
                <path d="M5 0v10M0 5h10M1.500 1.500l7 7M8.500 1.500l-7 7" stroke="#e0941c" strokeWidth="1.200" />
                <circle cx="5" cy="5" r="2" fill="#fff2b0" />
            </Svg>
        </button>
    </div>
);

const StatusBar = () => (
    <footer className="flex h-[21px] shrink-0 items-center bg-linear-to-b from-[#dce9fa] via-[#b7d0f2] to-[#cfe1f8] text-xs text-[#15428b]">
        <span className="flex h-full w-10 items-center justify-center border-r border-[#9dbbe4]">就绪</span>
        <button aria-label="录制宏" className="flex h-full w-[34px] items-center justify-center border-r border-[#9dbbe4]">
            <Svg>{ICONS.record}</Svg>
        </button>
        <div className="ml-auto flex h-full w-4 items-end justify-end bg-[#7f9ccb] p-px">
            <Svg className="h-3 w-3">
                <path d="M12 2h3M7 7h3M12 7h3M2 12h3M7 12h3M12 12h3" stroke="#33486e" strokeWidth="3" />
            </Svg>
        </div>
    </footer>
);

const FORMATS = ['常规', '数值', '货币', '会计专用', '日期', '时间', '百分比', '分数', '科学记数', '文本', '特殊', '自定义'];

const Watermark = () => (
    <div className="absolute right-4 bottom-5 text-white [-webkit-text-stroke:2px_#dedede] [paint-order:stroke_fill]" aria-hidden="true">
        <div className="flex items-end">
            <span className="font-['Liberation_Sans'] text-[34px] leading-9 font-bold">Bai</span>
            <span className="relative block h-14 w-[50px]">
                <svg viewBox="0 0 50 56" className="absolute inset-0 h-14 w-[50px]" fill="#fff" stroke="#dcdcdc" strokeWidth="1.200">
                    <ellipse cx="7" cy="21" rx="6.500" ry="8.500" />
                    <ellipse cx="19" cy="10" rx="6" ry="8.500" />
                    <ellipse cx="34" cy="11" rx="6" ry="8.500" />
                    <ellipse cx="43" cy="25" rx="6.500" ry="8.500" />
                    <path d="M25 23c8 0 11 8 16 13 7 7 5 18-4 18-6 0-8-1-12-1s-6 1-12 1C3 54 2 43 9 36c5-5 8-13 16-13z" />
                </svg>
                <span className="absolute inset-x-0 bottom-1 text-center font-['Liberation_Sans'] text-[22px] leading-6 font-bold">du</span>
            </span>
            <span className="pb-0.5 pl-0.5 text-[28px] leading-8 font-bold">经验</span>
        </div>
        <div className="font-['Open_Sans'] text-[19px] leading-6">jingyan.baidu.com</div>
    </div>
);

const FormatDialog = () => {
    const [format, setFormat] = useState('常规');

    return (
        <div
            role="dialog"
            aria-label="设置单元格格式"
            className="absolute top-[373px] right-[19px] bottom-0 left-[267px] z-20 flex flex-col rounded-t-lg border border-b-0 border-[#1c232b] bg-[linear-gradient(180deg,#a9cbf0_0,#b5d8fc_30px,#d3e6fa_80px,#dbeafa_125px,#a4c9ee_132px,#b3d6fb)] px-1.5 text-xs text-black shadow-[0_0_14px_3px_rgba(0,0,0,.6),inset_0_0_0_1px_rgba(255,255,255,.8)]"
        >
            <div className="-mx-[5px] mt-px flex h-[27px] shrink-0 rounded-t-lg bg-[linear-gradient(90deg,#d5e4f6_0,#c0daf6_15%,#a8ccf3_29%,#7291b6_31%,#b3d8fe_33%,#b3d8fe_75%,#cfe3f9)]">
                <h2 className="flex-1 pt-1 pl-[6px] leading-[18px] [text-shadow:0_0_6px_#fff,0_0_8px_#fff]">设置单元格格式</h2>
                <div className="flex h-[19px] overflow-hidden rounded-b border border-t-0 border-[#4a5566]">
                    <button aria-label="帮助" className="w-[27px] border-r border-[#4a5566] bg-linear-to-b from-[#d6e2f0] from-50% to-[#a3b9d4] to-50%">
                        <span className="block text-sm leading-[18px] font-bold text-white [-webkit-text-stroke:2px_#45505e] [paint-order:stroke_fill]">?</span>
                    </button>
                    <button aria-label="关闭" className="flex w-[46px] items-center justify-center bg-linear-to-b from-[#e3a091] via-[#c73f28] via-50% to-[#d8694c]">
                        <Svg className="w-3 h-3">
                            <path d="M2 3l12 10M14 3L2 13" stroke="#54383a" strokeWidth="6" />
                            <path d="M3 4l10 8M13 4L3 12" stroke="#fff" strokeWidth="3.500" />
                        </Svg>
                    </button>
                </div>
                <span className="w-1.5" />
            </div>
            <div className="flex min-h-0 flex-1 flex-col border border-b-0 border-[#58677a] bg-[#f0f0f0] px-1.5 pt-1.5 shadow-[0_0_0_1px_rgba(255,255,255,.7)]">
                <div className="flex h-5 shrink-0 items-end">
                    <button className="relative z-10 -mb-px h-[21px] w-[56px] border border-b-0 border-[#8c8c98] bg-white p-[3px]">
                        <span className="block border border-dotted border-black leading-[14px]">数字</span>
                    </button>
                    {['对齐', '字体', '边框', '填充', '保护'].map((tab) => (
                        <button
                            key={tab}
                            className="mr-px h-[18px] w-[53px] border border-b-0 border-[#8c8c98] bg-linear-to-b from-[#f4f4f4] from-45% to-[#d2d2d2] leading-4"
                        >
                            {tab}
                        </button>
                    ))}
                </div>
                <div className="relative mr-0.5 flex min-h-0 flex-1 border border-b-0 border-[#8c8c98] bg-white pt-1.5 pl-2">
                    <div className="flex w-[122px] shrink-0 flex-col">
                        <label htmlFor="format-list" className="h-[17px] leading-4">分类(<u>C</u>):</label>
                        <div className="flex min-h-0 flex-1 border border-b-0 border-[#8c8c98] pt-px pl-px">
                            <select
                                id="format-list"
                                size={12}
                                value={format}
                                onChange={(e) => setFormat(e.target.value)}
                                className="h-full min-w-0 flex-1 appearance-none overflow-hidden p-0 text-xs leading-3 outline-none"
                            >
                                {FORMATS.map((name) => (
                                    <option
                                        key={name}
                                        className="flex h-3 min-h-0 items-center p-0 pl-px leading-3 checked:bg-linear-to-r checked:from-[#3399ff] checked:to-[#3399ff] checked:text-white"
                                    >
                                        {name}
                                    </option>
                                ))}
                            </select>
                            <div className="flex w-[17px] justify-center bg-[#f0f0f0] pt-2">
                                <svg viewBox="0 0 8 4" className="h-1 w-2"><path d="M0 4l4-4 4 4z" fill="#8a8a8a" /></svg>
                            </div>
                        </div>
                    </div>
                    <div className="min-w-0 flex-1 pt-[15px] pr-2 pl-[9px]">
                        <fieldset className="h-[35px] rounded border border-[#d5dfe5] pl-1">
                            <legend className="px-0.5 leading-4">示例</legend>
                        </fieldset>
                        <p className="pt-1 leading-4">常规单元格格式不包含任何特定的数字格式。</p>
                    </div>
                    {/* arrow pointing at the 文本 entry */}
                    <svg viewBox="0 0 96 16" className="absolute top-[124px] left-9 h-4 w-24" fill="none">
                        <path d="M18 11L96 4" stroke="#ff0000" strokeWidth="3" />
                        <path d="M2 13L20 6l1 11z" fill="#ff0000" />
                    </svg>
                    <Watermark />
                </div>
            </div>
        </div>
    );
};

const App = () => (
    <div className="relative flex h-screen flex-col overflow-hidden rounded-t-lg rounded-b-md border border-[#4c545c] bg-[linear-gradient(90deg,#08090c_0,#08090c_5%,#c8d9b0_8%,#08090c_11%,#08090c_12%,#9fc4f0_16%,#08090c_20%,#a5e6e0_24%,#08090c_28%)] font-['Noto_Sans','Noto_Sans_CJK_SC',sans-serif]">
        <TitleBar />
        <div className="flex min-h-0 flex-1">
            <div className="w-[7px] shrink-0 bg-[linear-gradient(180deg,#7fb2e0_0,#3a4654_30px,#0a0b0e_60px,#0a0b0e_120px,#4a4e52_145px,#0a0b0e_170px,#4a8fc8_200px,#0a0b0e_225px,#0a0b0e_300px,#50606e_350px,#0a0b0e_380px,#0a0b0e_490px,#5f88b4_510px,#0a0b0e_550px,#6b6f48_600px,#3da5c8_630px)]" />
            <main className="flex min-w-0 flex-1 flex-col border-t border-b border-[#3b4754] bg-[#c4d7f0]">
                <Ribbon />
                <FormulaBar />
                <div className="mt-[3px] flex min-h-0 flex-1">
                    <Sheet />
                    <VerticalScroll />
                </div>
                <SheetTabs />
                <StatusBar />
            </main>
            <div className="w-2 shrink-0 border-l border-[#5b6f86] bg-[linear-gradient(180deg,#f2fbfc_0,#d9e9ee_120px,#8fb4cc_180px,#c9f7fb_215px,#bde9f5_270px,#6a8fc0_350px,#49648e_430px,#b8e4ec_470px,#d6fbfa_540px,#eefafa)]" />
        </div>
        <div className="h-1.5 shrink-0" />
        <OfficeButton />
        <FormatDialog />
    </div>
);

export default App;
